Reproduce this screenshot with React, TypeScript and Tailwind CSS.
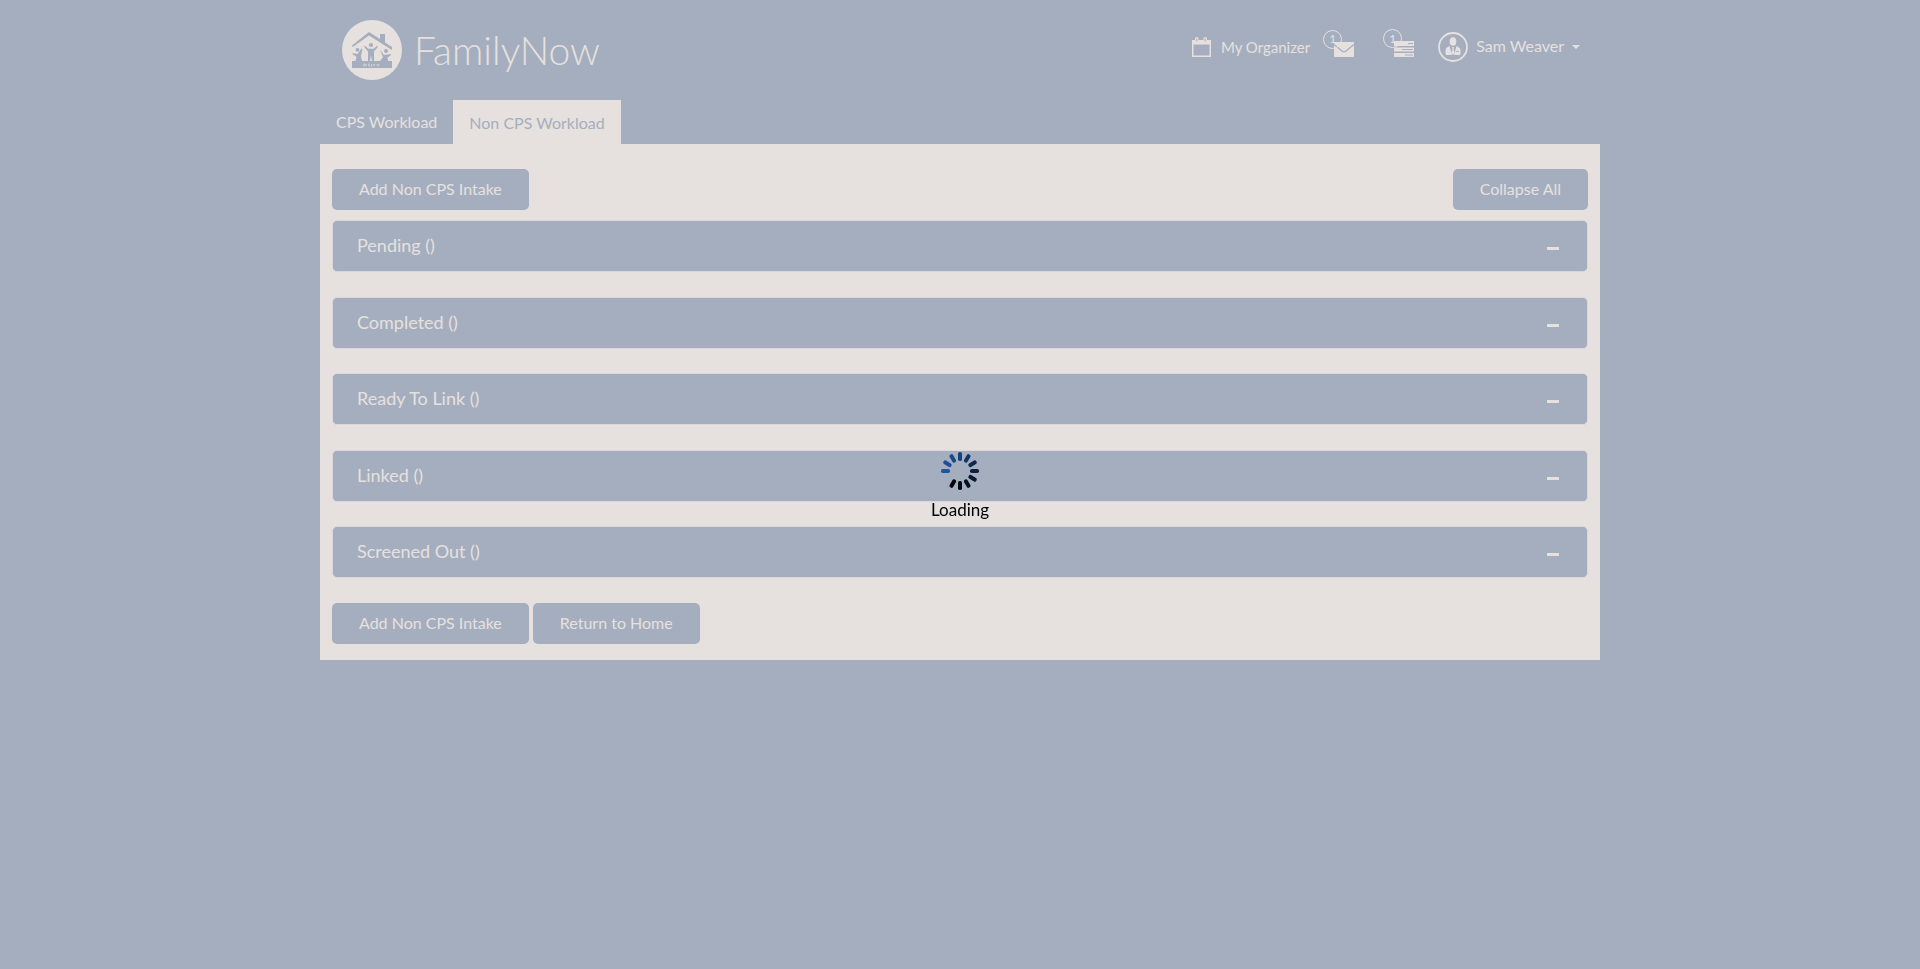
const sections = ['Pending', 'Completed', 'Ready To Link', 'Linked', 'Screened Out']

const spokes = [
  '#17427d', '#123563', '#0e294e', '#0b203d', '#08182e', '#05101f',
  '#030a13', '#010306', '', '#1f55a0', '#1d4f96', '#1a498b',
]

function Logo() {
  return (
    <svg viewBox="0 0 60 60" className="size-[60px]" aria-hidden="true">
      <circle cx="30" cy="30" r="30" fill="#e6e1de" />
      <g fill="#a5aebf">
        <path d="M10 25.500 25 13.500 27 12 38 19V14h5v8.500L50 27v3L27 15.500 11.500 26.500 10 26.500Z" />
        <path d="M10 41h40v7H10Z" />
        <circle cx="29" cy="25" r="2.100" />
        <circle cx="15.500" cy="29.800" r="1.900" />
        <circle cx="44" cy="31" r="2" />
        <path d="M22.800 25.800 26.500 28.700H31.500L35.200 25.800 36 26.800 32 31.500V41H30L29 35 28 41H26V31.500L22 26.800Z" />
        <path d="M10.500 33 15.500 34 19.500 28.500 20.500 29 19 36 20 41H13.500L14.500 37 10.500 34Z" />
        <path d="M38 30 42 35 48.500 34 49 35 45.500 37.500 46 41H38L41 37Z" />
      </g>
      <path d="M22 43.500v3M24 44v2M27 43.500v3M29.500 44.500v2M32 44v2M34.500 45h3" stroke="#e6e1de" strokeWidth="1" />
    </svg>
  )
}

function CalendarIcon() {
  return (
    <svg viewBox="0 0 19 20" className="h-5 w-[19px]" aria-hidden="true">
      <path
        fillRule="evenodd"
        fill="currentColor"
        d="M0 3h3V1.500Q3 0 4.700 0T6.500 1.500V3h5V1.500Q11.500 0 13.200 0T15 1.500V3h4v17H0ZM1.500 7.500v11h16v-11ZM4.300 1.500v3h1v-3ZM12.700 1.500v3h1v-3Z"
      />
    </svg>
  )
}

function MailIcon() {
  return (
    <svg viewBox="0 0 20 15" className="h-[15px] w-5" aria-hidden="true">
      <path d="M0 0h20v15H0Z" fill="currentColor" />
      <path d="M0 2.500 8 9q2 1.500 4 0l8-6.500" fill="none" stroke="#a5aebf" strokeWidth="1.200" />
    </svg>
  )
}

function TasksIcon() {
  return (
    <svg viewBox="0 0 20 16" className="h-4 w-5" aria-hidden="true">
      <path d="M0 0h20v5H0ZM0 6.500h20v4H0ZM0 12h20v4H0Z" fill="currentColor" />
      <path d="M14 2h5v1h-5ZM8 8h11v1H8ZM11 13.500h8v1h-8Z" fill="#a5aebf" />
    </svg>
  )
}

function UserIcon() {
  return (
    <svg viewBox="0 0 30 30" className="size-[30px]" aria-hidden="true">
      <circle cx="15" cy="15" r="14" fill="none" stroke="currentColor" strokeWidth="1.800" />
      <g fill="currentColor">
        <ellipse cx="15" cy="9.500" rx="3.300" ry="4.300" />
        <path d="M11.500 14 14 23H9q-1.500 0-1.500-1.500V18q0-2 4-4ZM18.500 14 16 23h5q1.500 0 1.500-1.500V18q0-2-4-4ZM14 15h2l-.5 2 1 4-1.500 2-1.500-2 1-4Z" />
      </g>
      <path d="M18 19.500h3" stroke="#a5aebf" strokeWidth=".8" />
    </svg>
  )
}

function Spinner() {
  return (
    <svg viewBox="0 0 38 38" className="size-[38px]" aria-hidden="true">
      {spokes.map((color, i) =>
        color ? (
          <rect key={i} x="17" y="0" width="4" height="9" rx="1.700" fill={color} transform={`rotate(${i * 30} 19 19)`} />
        ) : null,
      )}
    </svg>
  )
}

function CountBadge() {
  return (
    <span className="absolute -top-3 -left-[11px] flex size-[19px] items-center justify-center rounded-full border border-[#e6e1de] text-xs leading-none">
      1
    </span>
  )
}

function ActionButton({ label }: { label: string }) {
  return (
    <button type="button" className="h-[41px] rounded-[5px] bg-[#a5aebf] px-[27px] pb-0.5 text-base">
      {label}
    </button>
  )
}

export default function App() {
  return (
    <div className="min-h-screen bg-[#a5aebf] font-['Lato',sans-serif] text-[#e6e1de]">
      <div className="mx-auto max-w-7xl">
        <header className="flex h-[100px] items-start justify-between pr-5 pl-[22px]">
          <a href="#home" className="mt-5 flex items-center gap-3">
            <Logo />
            <span className="text-[39px] leading-[60px] font-light">FamilyNow</span>
          </a>
          <nav className="mt-8 flex h-[30px] items-center" aria-label="Account">
            <a href="#organizer" className="flex items-center gap-[10px] text-[15px]">
              <CalendarIcon />
              My Organizer
            </a>
            <a href="#messages" aria-label="Messages" className="relative mt-1 ml-6">
              <MailIcon />
              <CountBadge />
            </a>
            <a href="#tasks" aria-label="Tasks" className="relative mt-1 ml-10">
              <TasksIcon />
              <CountBadge />
            </a>
            <button type="button" className="ml-6 flex items-center text-base">
              <UserIcon />
              <span className="ml-2 pb-0.5">Sam Weaver</span>
              <svg viewBox="0 0 8 4" className="ml-2 h-1 w-2" aria-hidden="true">
                <path d="M0 0h8L4 4Z" fill="currentColor" />
              </svg>
            </button>
          </nav>
        </header>

        <nav className="flex h-11" aria-label="Workloads">
          <a href="#cps" className="px-4 text-base leading-[44px]">CPS Workload</a>
          <a href="#non-cps" aria-current="page" className="bg-[#e6e1de] px-4 text-base leading-[46px] text-[#a5aebf]">
            Non CPS Workload
          </a>
        </nav>

        <main className="bg-[#e6e1de] px-3 pt-[25px] pb-4">
          <div className="flex justify-between">
            <ActionButton label="Add Non CPS Intake" />
            <ActionButton label="Collapse All" />
          </div>
          <div className="mt-[10px]">
            {sections.map((name) => (
              <button
                key={name}
                type="button"
                aria-expanded="true"
                className="flex h-[52px] w-full items-center justify-between rounded-[5px] border border-[#dad8da] bg-[#a5aebf] pr-7 pl-6 text-lg odd:mb-[25px] even:mb-6 last:mb-6"
              >
                <span className="pb-0.5">{name} ()</span>
                <span className="mt-1 h-[3px] w-3 bg-[#e6e1de]" />
              </button>
            ))}
          </div>
          <div className="flex gap-1">
            <ActionButton label="Add Non CPS Intake" />
            <ActionButton label="Return to Home" />
          </div>
        </main>
      </div>

      <div role="status" className="fixed inset-0 flex flex-col items-center justify-center gap-2 pt-0.5 text-black">
        <Spinner />
        <span className="pt-0.5 text-[17px] leading-5">Loading</span>
      </div>
    </div>
  )
}
